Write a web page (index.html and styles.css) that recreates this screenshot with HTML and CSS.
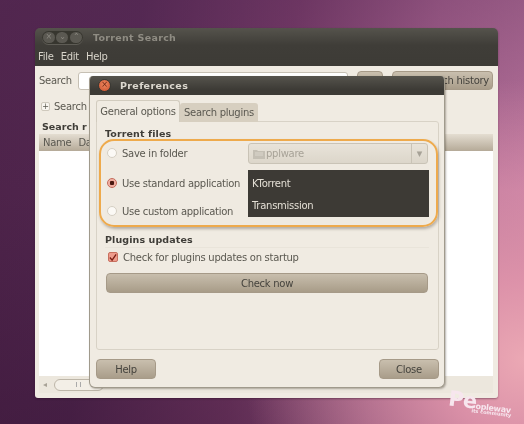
FILE: index.html
```html
<!DOCTYPE html>
<html lang="en">
<head>
<meta charset="utf-8">
<title>Torrent Search Preferences</title>
<link rel="stylesheet" href="styles.css">
</head>
<body>
<div class="desktop">
  <section class="window main-window">
    <header class="main-head">
      <div class="title-row">
        <div class="win-controls">
          <span class="ctl">×</span><span class="ctl">⌄</span><span class="ctl">⌃</span>
        </div>
        <span class="main-title">Torrent Search</span>
      </div>
      <nav class="menu"><span>File</span><span>Edit</span><span>Help</span></nav>
    </header>
    <div class="main-body">
      <div class="search-row">
        <span class="search-label">Search</span>
        <span class="entry"></span>
        <span class="btn small-btn"></span>
        <span class="btn history-btn">Search history</span>
      </div>
      <div class="expander"><span class="plus">+</span><span>Search</span></div>
      <div class="results-title">Search r</div>
      <div class="list-head"><span>Name</span><span>Da</span></div>
      <div class="list-body"></div>
      <div class="scrollbar"><span class="arrow">◂</span><span class="thumb"><i></i></span></div>
    </div>
  </section>

  <section class="window dialog">
    <header class="dialog-head">
      <span class="close-dot">×</span>
      <span class="dialog-title">Preferences</span>
    </header>
    <div class="dialog-body">
      <div class="tabs">
        <span class="tab tab-active">General options</span>
        <span class="tab">Search plugins</span>
      </div>
      <div class="panel">
        <h2 class="group-title">Torrent files</h2>
        <div class="torrent-group">
          <div class="radio-col">
            <label class="radio-row row-save"><span class="radio"></span>Save in folder</label>
            <label class="radio-row row-std"><span class="radio radio-on"></span>Use standard application</label>
            <label class="radio-row row-custom"><span class="radio"></span>Use custom application</label>
          </div>
          <div class="choice-col">
            <div class="combo">
              <span class="combo-text"><svg class="folder" width="12" height="11" viewBox="0 0 12 11"><path d="M0 2h4l1 1h7v8H0z" fill="#c4bfb4"/><path d="M2 5h8M2 7h8" stroke="#dcd7cd"/></svg>pplware</span>
              <span class="combo-arrow">▾</span>
            </div>
            <ul class="app-list">
              <li>KTorrent</li>
              <li>Transmission</li>
            </ul>
          </div>
        </div>
        <h2 class="group-title updates-title">Plugins updates</h2>
        <div class="updates">
          <label class="check-row"><span class="check"><svg width="9" height="9" viewBox="0 0 9 9"><path d="M1 4.500l2.500 3L8 1" fill="none" stroke="#7a1f14" stroke-width="1.500"/></svg></span>Check for plugins updates on startup</label>
          <span class="btn check-now">Check now</span>
        </div>
      </div>
      <div class="dialog-actions">
        <span class="btn action-btn">Help</span>
        <span class="btn action-btn">Close</span>
      </div>
    </div>
  </section>

  <div class="highlight"></div>
  <div class="watermark"><span class="wm-big">Pe</span><span class="wm-small">oplewav</span><em>its community</em></div>
</div>
</body>
</html>
```
FILE: styles.css
```css
* { box-sizing: border-box; }
html, body { margin: 0; padding: 0; }
body { width: 524px; height: 424px; overflow: hidden; }

.desktop {
  position: relative;
  width: 524px;
  height: 424px;
  overflow: hidden;
  font-family: "DejaVu Sans", sans-serif;
  font-size: 10px;
  letter-spacing: -.27px;
  color: #5a5850;
  filter: blur(.35px);
  background:
    radial-gradient(circle at 524px 360px, #eba8b4 0, rgba(226,150,172,.9) 80px, rgba(190,110,155,0) 280px),
    linear-gradient(180deg, rgba(90,45,90,.35) 0, rgba(60,25,60,0) 45%, rgba(45,15,45,.35) 100%),
    linear-gradient(100deg, #4d2349 0, #51264f 24%, #763a66 50%, #a9648f 74%, #c47fa5 100%);
}

.window { position: absolute; }

/* Main window */
.main-window {
  left: 35px;
  top: 28px;
  width: 463px;
  height: 370px;
  display: flex;
  flex-direction: column;
  border-radius: 5px 5px 3px 3px;
  overflow: hidden;
  box-shadow: 0 1px 2px rgba(40, 10, 30, .4);
}
.main-head {
  height: 38px;
  background: linear-gradient(#55534c 0, #3f3d38 45%, #3d3b36 100%);
  color: #dcd8cf;
}
.title-row {
  height: 19px;
  display: flex;
  align-items: center;
  padding-left: 7px;
  gap: 10px;
}
.win-controls {
  display: flex;
  height: 13px;
  width: 41px;
  border-radius: 7px;
  background: #37362f;
  box-shadow: 0 1px 0 #5e5c55;
  align-items: center;
  justify-content: space-around;
}
.ctl {
  width: 12px;
  height: 11px;
  border-radius: 6px;
  background: #5b5952;
  color: #8b8880;
  font-size: 8px;
  line-height: 10px;
  text-align: center;
}
.main-title {
  font-weight: bold;
  font-size: 9.5px;
  letter-spacing: .3px;
  color: #8f8c83;
}
.menu {
  height: 19px;
  display: flex;
  align-items: center;
  padding-left: 3px;
  gap: 7px;
  color: #d8d4ca;
}

.main-body {
  flex: 1;
  display: flex;
  flex-direction: column;
  background: #f0ebe2;
  padding: 5px 5px 5px 4px;
  min-height: 0;
}
.search-row {
  display: flex;
  align-items: center;
  height: 19px;
}
.search-label { width: 39px; }
.entry {
  width: 270px;
  height: 18px;
  background: #fff;
  border: 1px solid #c6c0b4;
  border-radius: 3px;
}
.btn {
  display: flex;
  align-items: center;
  justify-content: center;
  background: linear-gradient(#c9bfae, #a99d8a);
  border: 1px solid #a69a88;
  border-radius: 4px;
  color: #45433d;
}
.small-btn { width: 26px; height: 19px; margin-left: 9px; }
.history-btn { width: 101px; height: 19px; margin-left: 9px; justify-content: flex-end; padding-right: 3px; }
.expander {
  display: flex;
  align-items: center;
  gap: 4px;
  height: 16px;
  margin-top: 8px;
  padding-left: 2px;
}
.plus {
  width: 9px;
  height: 9px;
  border: 1px solid #cfc9bd;
  border-radius: 2px;
  background: #f8f5ef;
  font-size: 8px;
  line-height: 7px;
  text-align: center;
}
.results-title {
  margin-top: 6px;
  padding-left: 3px;
  font-weight: bold;
  font-size: 9.5px;
  letter-spacing: 0;
  color: #3f3d38;
  height: 13px;
  line-height: 13px;
}
.list-head {
  display: flex;
  gap: 7px;
  height: 17px;
  margin-top: 1px;
  padding-left: 4px;
  align-items: center;
  background: linear-gradient(#e4ddd1, #b5aa98);
}
.list-body { flex: 1; background: #fff; }
.scrollbar {
  height: 17px;
  display: flex;
  align-items: center;
  padding-left: 4px;
  background: #ece7dd;
  color: #a8a297;
  font-size: 8px;
}
.thumb {
  display: flex;
  align-items: center;
  justify-content: center;
  width: 50px;
  height: 12px;
  margin-left: 7px;
  border: 1px solid #bdb6a8;
  border-radius: 6px;
  background: #f3efe7;
}
.thumb i { width: 5px; height: 5px; border-left: 1px solid #aaa; border-right: 1px solid #aaa; }

/* Preferences dialog */
.dialog {
  left: 89px;
  top: 76px;
  width: 356px;
  height: 312px;
  display: flex;
  flex-direction: column;
  border: 1px solid #a09a8c;
  border-top: 0;
  border-radius: 4px 4px 6px 6px;
  background: #f0ebe2;
  box-shadow: 1px 1px 2px rgba(50, 40, 30, .35);
  overflow: hidden;
}
.dialog-head {
  height: 19px;
  display: flex;
  align-items: center;
  gap: 9px;
  padding-left: 8px;
  background: linear-gradient(#56544d, #3d3b36 70%);
  color: #dcd8cf;
}
.close-dot {
  width: 11px;
  height: 11px;
  border-radius: 50%;
  background: radial-gradient(circle at 50% 40%, #ee8a62, #c94f2c);
  border: 1px solid #3a3833;
  box-sizing: content-box;
  color: #6c2411;
  font-size: 8px;
  line-height: 10px;
  text-align: center;
}
.dialog-title { font-weight: bold; font-size: 9.5px; letter-spacing: .35px; }
.dialog-body {
  flex: 1;
  display: flex;
  flex-direction: column;
  padding: 5px 5px 8px 6px;
  min-height: 0;
}
.tabs { display: flex; align-items: flex-end; height: 22px; position: relative; z-index: 1; }
.tab {
  height: 19px;
  padding: 0 4px;
  display: flex;
  align-items: center;
  background: #d7cfc0;
  border-radius: 3px 3px 0 0;
  white-space: nowrap;
}
.tab-active {
  height: 22px;
  background: #f0ebe2;
  border: 1px solid #d2ccbf;
  border-bottom: 0;
  width: 84px;
  justify-content: center;
}
.panel {
  flex: 1;
  margin-top: -1px;
  border: 1px solid #d8d2c6;
  border-radius: 0 3px 3px 3px;
  padding: 5px 7px 0 8px;
  min-height: 0;
}
.group-title {
  margin: 0;
  font-size: 9.5px;
  font-weight: bold;
  line-height: 13px;
  color: #3f3d38;
  letter-spacing: .1px;
}
.torrent-group {
  display: flex;
  height: 82px;
  margin-top: 3px;
  margin-right: 2px;
  border-radius: 8px;
  background: #efeae1;
}
.radio-col {
  width: 143px;
  display: flex;
  flex-direction: column;
  padding-left: 2px;
}
.radio-row { display: flex; align-items: center; gap: 5px; height: 14px; white-space: nowrap; }
.row-save { margin-top: 3px; }
.row-std { margin-top: 16px; }
.row-custom { margin-top: 14px; }
.radio {
  width: 10px;
  height: 10px;
  flex: none;
  border-radius: 50%;
  background: #fbf9f5;
  border: 1px solid #d5cfc3;
}
.radio-on {
  border-color: #c46a5a;
  background: radial-gradient(circle, #4a1810 0, #4a1810 2px, #f0a99a 2.500px, #f6c7bc 100%);
}
.choice-col { flex: 1; display: flex; flex-direction: column; gap: 6px; min-width: 0; }
.combo {
  display: flex;
  height: 21px;
  width: 180px;
  background: linear-gradient(#e8e3d9, #dcd6ca);
  border: 1px solid #c9c3b6;
  border-radius: 3px;
  color: #a7a297;
}
.combo-text { flex: 1; display: flex; align-items: center; padding-left: 4px; }
.folder { margin-right: 1px; }
.combo-arrow {
  width: 16px;
  border-left: 1px solid #c9c3b6;
  display: flex;
  align-items: center;
  justify-content: center;
  font-size: 11px;
  color: #a7a297;
}
.app-list {
  margin: 0;
  padding: 0;
  list-style: none;
  width: 181px;
  height: 47px;
  background: #3d3a35;
  color: #e4dfd5;
}
.app-list li { height: 22px; line-height: 22px; padding-left: 4px; }
.app-list li:first-child { margin-top: 1px; padding-top: 2px; height: 24px; }
.app-list li:last-child { height: 20px; }
.updates-title { margin-top: 8px; }
.updates {
  margin-top: 1px;
  margin-right: 2px;
  padding: 2px 2px 0 3px;
  border-top: 1px solid #e9e4da;
}
.check-row { display: flex; align-items: center; gap: 5px; height: 14px; white-space: nowrap; }
.check {
  width: 10px;
  height: 10px;
  display: flex;
  align-items: center;
  justify-content: center;
  border: 1px solid #c8705f;
  border-radius: 2px;
  background: #ee9c8c;
}
.check-now { height: 20px; width: 322px; margin-top: 9px; margin-left: -2px; background: linear-gradient(#c8bead, #a89c88); }
.dialog-actions {
  display: flex;
  justify-content: space-between;
  margin-top: 9px;
}
.action-btn { width: 60px; height: 20px; }

/* Callout annotation laid over the screenshot */
.highlight {
  position: absolute;
  left: 99px;
  top: 139px;
  width: 339px;
  height: 88px;
  border: 2px solid #eeaa4c;
  border-radius: 15px;
  box-shadow: 1px 2px 3px rgba(90, 80, 70, .4);
  pointer-events: none;
}
.watermark {
  position: absolute;
  left: 448px;
  top: 393px;
  width: 76px;
  height: 27px;
  transform: rotate(7deg);
  color: #f7e6ee;
  font-family: "DejaVu Sans", sans-serif;
  font-weight: bold;
  letter-spacing: 0;
  white-space: nowrap;
  line-height: 20px;
}
.wm-big { font-size: 21px; letter-spacing: -1px; }
.wm-small { font-size: 8px; letter-spacing: -.3px; }
.watermark em {
  position: absolute;
  left: 24px;
  top: 15px;
  font: bold 5px/8px "DejaVu Sans", sans-serif;
}
```
